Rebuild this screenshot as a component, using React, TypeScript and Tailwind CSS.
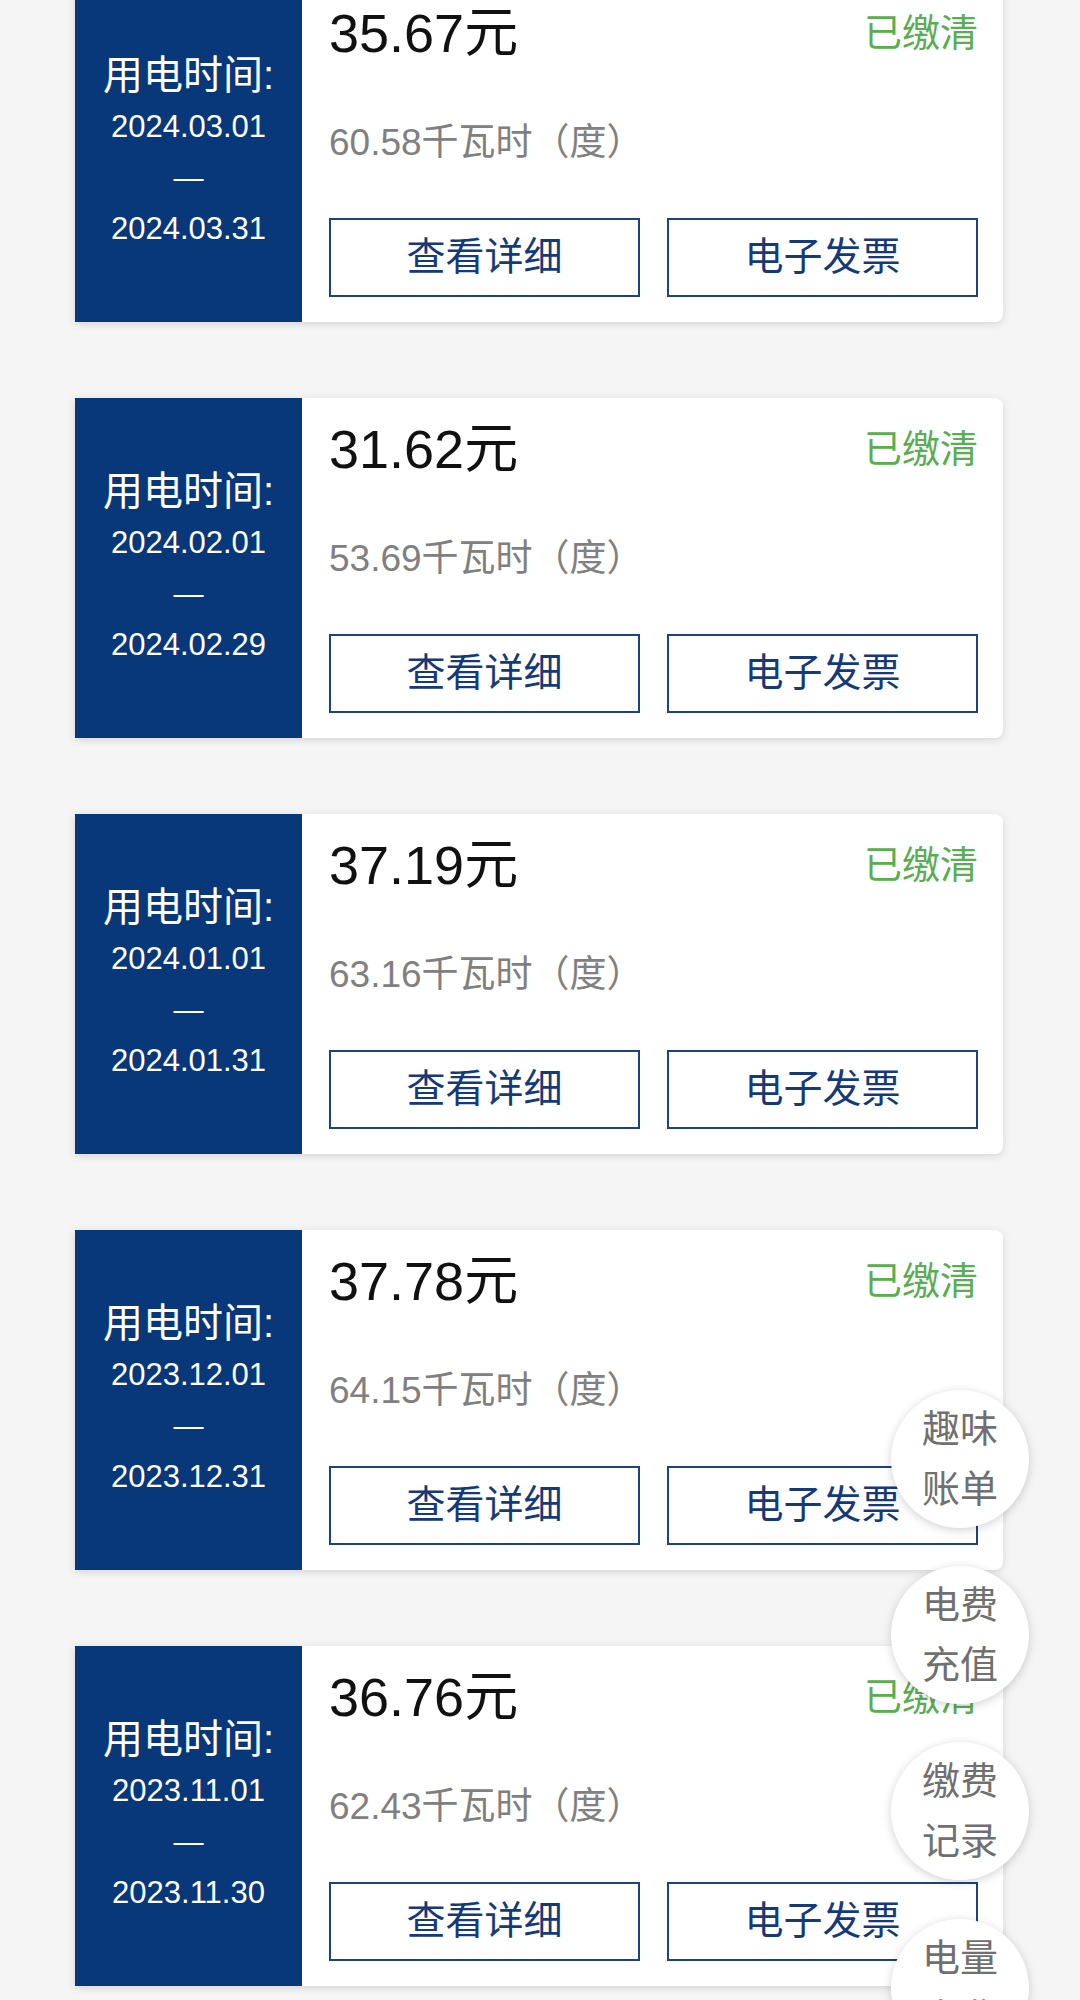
import React from "react"

type Bill = { amount: string; kwh: string; start: string; end: string }

const bills: Bill[] = [
  { amount: "35.67", kwh: "60.58", start: "2024.03.01", end: "2024.03.31" },
  { amount: "31.62", kwh: "53.69", start: "2024.02.01", end: "2024.02.29" },
  { amount: "37.19", kwh: "63.16", start: "2024.01.01", end: "2024.01.31" },
  { amount: "37.78", kwh: "64.15", start: "2023.12.01", end: "2023.12.31" },
  { amount: "36.76", kwh: "62.43", start: "2023.11.01", end: "2023.11.30" },
]

const floatButtons = [
  { top: "top-[1390px]", lines: ["趣味", "账单"] },
  { top: "top-[1566px]", lines: ["电费", "充值"] },
  { top: "top-[1742px]", lines: ["缴费", "记录"] },
  { top: "top-[1919px]", lines: ["电量", "电费"] },
]

function BillCard({ bill }: { bill: Bill }) {
  return (
    <div className="flex h-[340px] rounded-r-[8px] bg-white shadow-[0_2px_8px_rgba(0,0,0,0.13)]">
      <div className="flex w-[227px] shrink-0 flex-col items-center justify-center bg-[#08377a] text-white">
        <p className="text-[40px] leading-[51px]">用电时间:</p>
        <p className="text-[31px] leading-[51px]">{bill.start}</p>
        <p className="text-[30px] leading-[51px]">—</p>
        <p className="text-[31px] leading-[51px]">{bill.end}</p>
      </div>
      <div className="flex-1 pl-[27px] pr-[25px] pt-[21px]">
        <div className="flex h-[60px] items-center justify-between">
          <p className="text-[54px] leading-[60px] text-[#111111]">{bill.amount}元</p>
          <p className="text-[38px] leading-[50px] text-[#5aae4f]">已缴清</p>
        </div>
        <p className="mt-[55px] text-[37px] leading-[50px] text-[#808080]">{bill.kwh}千瓦时（度）</p>
        <div className="mt-[50px] grid grid-cols-2 gap-[27px]">
          <button className="flex h-[79px] items-center justify-center border-2 border-[#1d4282] text-[39px] text-[#163a78]">
            查看详细
          </button>
          <button className="flex h-[79px] items-center justify-center border-2 border-[#1d4282] text-[39px] text-[#163a78]">
            电子发票
          </button>
        </div>
      </div>
    </div>
  )
}

export default function App() {
  return (
    <div className="relative h-[2000px] overflow-hidden bg-[#f5f5f5] font-['Liberation_Sans','Noto_Sans_CJK_SC',sans-serif]">
      <div className="-mt-[18px] flex flex-col gap-[76px] pl-[75px] pr-[77px]">
        {bills.map((b) => (
          <BillCard key={b.start} bill={b} />
        ))}
      </div>
      {floatButtons.map((f) => (
        <div
          key={f.lines[0]}
          className={`absolute left-[891px] ${f.top} flex h-[138px] w-[138px] flex-col items-center justify-center rounded-full bg-white text-[38px] leading-[60px] text-[#707070] shadow-[0_2px_10px_rgba(0,0,0,0.18)]`}
        >
          {f.lines.map((l) => (
            <span key={l}>{l}</span>
          ))}
        </div>
      ))}
    </div>
  )
}
